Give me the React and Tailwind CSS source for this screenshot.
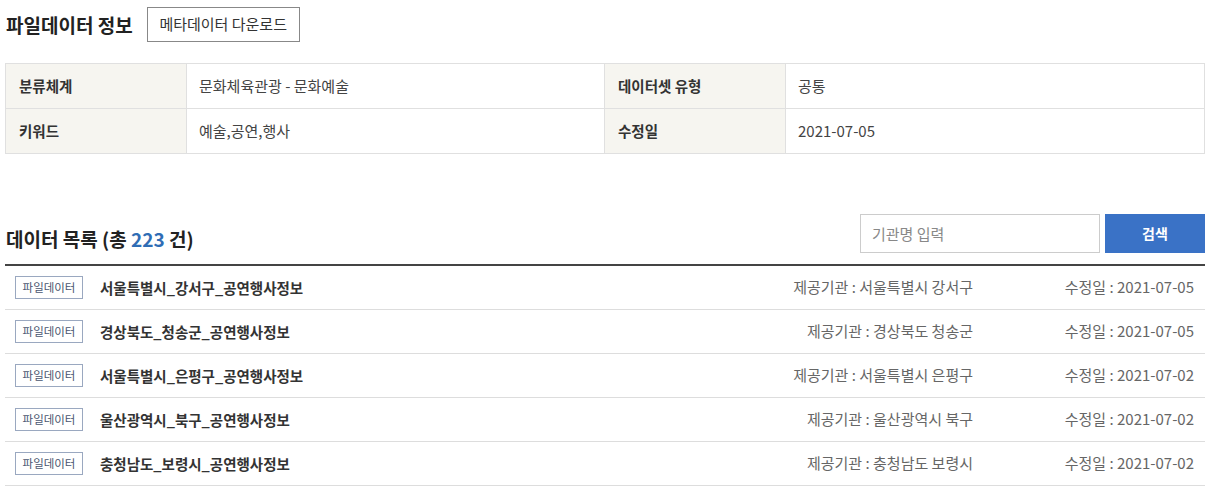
const font = { fontFamily: '"Noto Sans CJK KR", "Noto Sans", sans-serif' };

const meta = [
  [
    ["분류체계", "문화체육관광 - 문화예술"],
    ["데이터셋 유형", "공통"],
  ],
  [
    ["키워드", "예술,공연,행사"],
    ["수정일", "2021-07-05"],
  ],
];

const rows = [
  { title: "서울특별시_강서구_공연행사정보", org: "서울특별시 강서구", date: "2021-07-05" },
  { title: "경상북도_청송군_공연행사정보", org: "경상북도 청송군", date: "2021-07-05" },
  { title: "서울특별시_은평구_공연행사정보", org: "서울특별시 은평구", date: "2021-07-02" },
  { title: "울산광역시_북구_공연행사정보", org: "울산광역시 북구", date: "2021-07-02" },
  { title: "충청남도_보령시_공연행사정보", org: "충청남도 보령시", date: "2021-07-02" },
];

export default function App() {
  return (
    <div className="w-[1217px] h-[492px] bg-white overflow-hidden text-[#333]" style={font}>
      <div className="ml-[5px] w-[1200px]">
        <div className="flex items-center pt-[7px] gap-[14px]">
          <h2 className="text-[19px] font-bold leading-[35px] pl-[1px] text-[#222]">파일데이터 정보</h2>
          <button className="h-[35px] w-[153px] border border-[#888] text-[15px] text-[#333] bg-white">
            메타데이터 다운로드
          </button>
        </div>

        <table className="mt-[21px] w-full border-collapse text-[15px]">
          <tbody>
            {meta.map((row, i) => (
              <tr key={i} className="h-[45px]">
                {row.map(([label, value], j) => (
                  <>
                    <th
                      key={label + "h"}
                      className="w-[181px] border border-[#e0e0e0] bg-[#f6f5f0] text-left font-bold pl-[13px] text-[14.5px] text-[#333]"
                    >
                      {label}
                    </th>
                    <td
                      key={label + "d"}
                      className={`${j === 0 ? "w-[418px]" : ""} border border-[#e0e0e0] pl-[12px] text-[#444]`}
                    >
                      {value}
                    </td>
                  </>
                ))}
              </tr>
            ))}
          </tbody>
        </table>

        <div className="mt-[60px] flex items-end justify-between">
          <h2 className="text-[19px] font-bold leading-[28px] pl-[1px] text-[#222]">
            데이터 목록 (총 <span className="text-[#2f6db5]">223</span> 건)
          </h2>
          <div className="flex gap-[5px]">
            <input
              className="h-[39px] w-[240px] border border-[#ccc] px-[11px] text-[15px] placeholder:text-[#888] outline-none"
              placeholder="기관명 입력"
              style={font}
            />
            <button className="h-[39px] w-[100px] bg-[#3a72c6] text-white text-[14px] font-bold">검색</button>
          </div>
        </div>

        <div className="mt-[11px] border-t-2 border-[#444]">
          {rows.map((r) => (
            <div key={r.title} className="flex items-center h-[44px] border-b border-[#ddd]">
              <span className="ml-[10px] w-[68px] h-[23px] flex items-center justify-center border border-[#9aa8c0] text-[11.5px] text-[#4a5670]">
                파일데이터
              </span>
              <span className="ml-[17px] flex-1 text-[14.5px] font-bold text-[#333]">{r.title}</span>
              <span className="text-[15px] text-[#666] text-right">제공기관 : {r.org}</span>
              <span className="w-[232px] pr-[11px] text-[15px] text-[#666] text-right">수정일 : {r.date}</span>
            </div>
          ))}
        </div>
      </div>
    </div>
  );
}
